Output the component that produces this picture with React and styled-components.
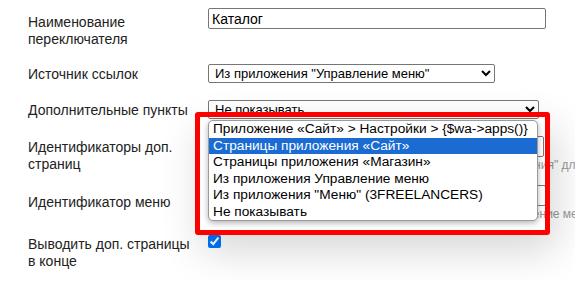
import React from "react";
import styled, { createGlobalStyle } from "styled-components";

const GlobalStyle = createGlobalStyle`
  html, body {
    margin: 0;
    background: #ffffff;
  }
  body {
    font-family: "Liberation Sans", Arial, sans-serif;
    font-size: 14px;
    color: #222222;
  }
`;

const Page = styled.div`
  position: relative;
  width: 575px;
  height: 281px;
  overflow: hidden;
  padding: 8px 0 0 28px;
  box-sizing: border-box;
`;

const Row = styled.div`
  display: flex;
  align-items: flex-start;
  margin-top: ${(props) => props.$gap || 0}px;
`;

const Label = styled.div`
  width: 165px;
  flex: 0 0 165px;
  margin-right: 15px;
  padding-top: ${(props) => props.$pt || 0}px;
  line-height: 17px;
  color: #222;
`;

const Field = styled.div`
  display: flex;
  flex-direction: column;
  min-width: 0;
`;

const TextInput = styled.input`
  box-sizing: border-box;
  width: ${(props) => props.$w || 338}px;
  height: 21px;
  margin: 0;
  padding: 0 3px;
  border: 1px solid #767676;
  border-radius: 2px;
  font-family: "Liberation Sans", Arial, sans-serif;
  font-size: 14px;
  color: #000;
  background: #fff;
`;

const Select = styled.select`
  box-sizing: border-box;
  width: ${(props) => props.$w}px;
  height: 19px;
  margin: 0;
  padding: 0 0 0 2px;
  border: 1px solid #767676;
  border-radius: 2px;
  font-family: "Liberation Sans", Arial, sans-serif;
  font-size: 13px;
  color: #000;
  background: #fff;
`;

const Hint = styled.div`
  white-space: nowrap;
  font-size: 12px;
  line-height: 14px;
  margin-top: 1px;
  color: #999999;
`;

const Check = styled.input`
  width: 13px;
  height: 13px;
  margin: 0;
  accent-color: #0075ff;
`;

const Marker = styled.div`
  position: absolute;
  left: 195px;
  top: 112px;
  width: 355px;
  height: 123px;
  box-sizing: border-box;
  border: 5px solid #ff0000;
  border-radius: 3px;
  padding: 3px 0 0 8px;
  box-shadow: 6px 16px 40px rgba(0, 0, 0, 0.16);
`;

const OptionList = styled.ul`
  list-style: none;
  margin: 0;
  padding: 0;
  width: 330px;
  box-sizing: border-box;
  border: 1px solid #9a9a9a;
  border-radius: 5px;
  background: #ffffff;
  overflow: hidden;
  box-shadow: 0 2px 6px rgba(0, 0, 0, 0.3);
`;

const OptionItem = styled.li`
  height: 16.5px;
  line-height: 16.5px;
  padding: 0 4px;
  font-size: 13.7px;
  white-space: nowrap;
  color: ${(props) => (props.$active ? "#ffffff" : "#000000")};
  background: ${(props) => (props.$active ? "#1a6bd2" : "transparent")};
`;

const options = [
  "Приложение «Сайт» > Настройки > {$wa->apps()}",
  "Страницы приложения «Сайт»",
  "Страницы приложения «Магазин»",
  "Из приложения Управление меню",
  'Из приложения "Меню" (3FREELANCERS)',
  "Не показывать",
];

export default function App() {
  return (
    <Page>
      <GlobalStyle />
      <Row>
        <Label $pt={6}>Наименование переключателя</Label>
        <Field>
          <TextInput defaultValue="Каталог" />
        </Field>
      </Row>
      <Row $gap={16}>
        <Label $pt={2}>Источник ссылок</Label>
        <Field>
          <Select $w={287} defaultValue="menu">
            <option value="menu">Из приложения "Управление меню"</option>
          </Select>
        </Field>
      </Row>
      <Row $gap={17}>
        <Label $pt={2}>Дополнительные пункты</Label>
        <Field>
          <Select $w={331} defaultValue="none">
            <option value="none">Не показывать</option>
          </Select>
        </Field>
      </Row>
      <Row $gap={17}>
        <Label $pt={3}>Идентификаторы доп. страниц</Label>
        <Field>
          <TextInput $w={336} />
          <Hint>
            Через запятую. Используется для вариантов «Из приложения" для
            выбранного меню
          </Hint>
        </Field>
      </Row>
      <Row $gap={12}>
        <Label $pt={9}>Идентификатор меню</Label>
        <Field>
          <TextInput $w={338} />
          <Hint>
            Идентификатор меню из приложения "Меню" или "Управление меню"
          </Hint>
        </Field>
      </Row>
      <Row $gap={14}>
        <Label $pt={1}>Выводить доп. страницы в конце</Label>
        <Field>
          <Check type="checkbox" defaultChecked />
        </Field>
      </Row>
      <Marker>
        <OptionList>
          {options.map((text, i) => (
            <OptionItem key={text} $active={i === 1}>
              {text}
            </OptionItem>
          ))}
        </OptionList>
      </Marker>
    </Page>
  );
}
